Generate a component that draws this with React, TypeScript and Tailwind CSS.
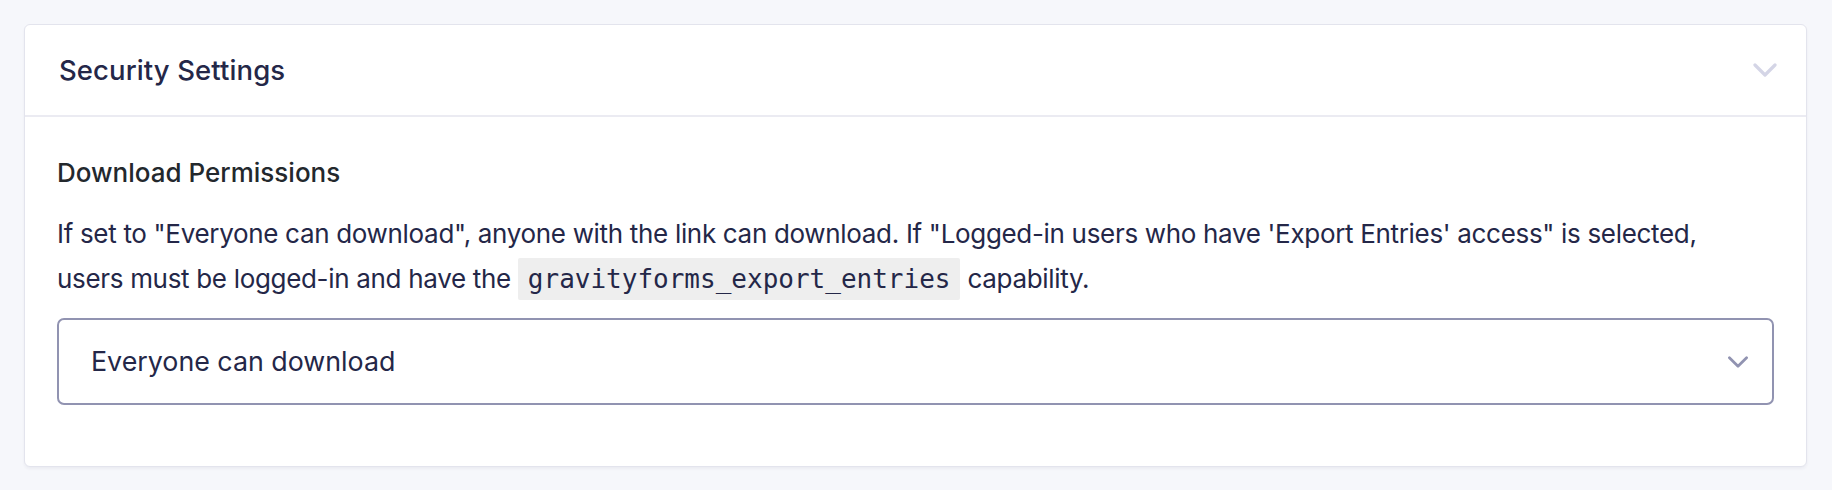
import React from "react";

function Chevron({ className }: { className?: string }) {
  return (
    <svg viewBox="0 0 24 14" className={className} fill="none">
      <polyline points="2,2 12,12 22,2" stroke="currentColor" strokeWidth="3.2" strokeLinecap="round" strokeLinejoin="round" />
    </svg>
  );
}

export default function App() {
  return (
    <div className="min-h-[490px] w-full bg-[#f6f7fb] pt-[24px] pl-[24px] pr-[25px] pb-[24px] font-['Inter','Liberation_Sans',sans-serif]">
      <div className="rounded-[6px] border border-[#e3e4ed] bg-white shadow-[0_2px_3px_rgba(40,40,80,0.05)]">
        <div className="flex h-[92px] items-center justify-between border-b-2 border-[#ebebf2] pl-[34px] pr-[29px]">
          <h2 className="text-[27.5px] font-medium leading-[32px] tracking-[0.1px] text-[#242748]">Security Settings</h2>
          <Chevron className="h-[14px] w-[24px] text-[#d4d5e6]" />
        </div>
        <div className="px-[32px] pt-[40px] pb-[61px]">
          <div className="text-[26px] font-medium leading-[32px] text-[#23282d]">Download Permissions</div>
          <p className="mt-[22px] text-[26px] leading-[45px] tracking-[-0.32px] text-[#242748]">
            If set to "Everyone can download", anyone with the link can download. If "Logged-in users who have 'Export
            Entries' access" is selected,
            <br />
            users must be logged-in and have the{" "}
            <code className="rounded-[2px] bg-[#eeeeee] px-[10px] py-[6px] font-['DejaVu_Sans_Mono','Liberation_Mono',monospace] text-[26px] tracking-normal">
              gravityforms_export_entries
            </code>{" "}
            capability.
          </p>
          <div className="mt-[16px] flex h-[87px] items-center justify-between rounded-[7px] border-2 border-[#9193b1] pl-[32px] pr-[23px]">
            <span className="text-[26.8px] text-[#242748]">Everyone can download</span>
            <Chevron className="h-[12px] w-[22px] text-[#9193b1]" />
          </div>
        </div>
      </div>
    </div>
  );
}
